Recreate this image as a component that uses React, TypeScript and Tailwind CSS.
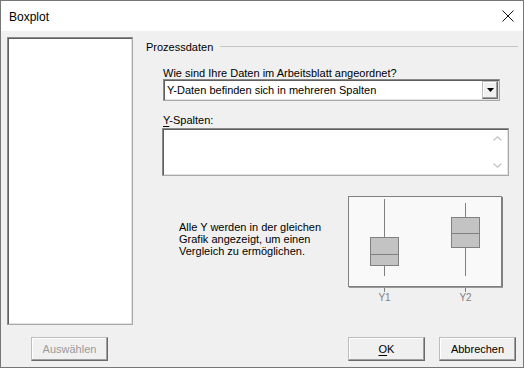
import React from 'react';

const sunken =
  'border border-t-[#8a8a8a] border-l-[#8a8a8a] border-r-[#a8a8a8] border-b-[#a8a8a8] shadow-[inset_1px_1px_0_#5e5e5e,inset_-1px_-1px_0_#e3e3e3]';

const raised =
  'border border-t-[#bdbdbd] border-l-[#bdbdbd] border-r-[#6a6a6a] border-b-[#6a6a6a] shadow-[inset_-1px_-1px_0_#a0a0a0,inset_1px_1px_0_#ffffff]';

function Chart() {
  return (
    <svg width="158" height="110" viewBox="0 0 158 110" className="block">
      <rect x="0.5" y="0.5" width="153" height="90" fill="#f9f9f9" stroke="#808080" />
      <line x1="154.5" y1="1" x2="154.5" y2="92" stroke="#808080" />
      <line x1="1" y1="91.5" x2="155" y2="91.5" stroke="#9a9a9a" />
      {/* Y1 */}
      <line x1="36.5" y1="3" x2="36.5" y2="80" stroke="#808080" />
      <rect x="22.5" y="41.5" width="28" height="28" fill="#c3c3c3" stroke="#808080" />
      <line x1="23" y1="58.5" x2="50" y2="58.5" stroke="#808080" />
      {/* Y2 */}
      <line x1="117.5" y1="7" x2="117.5" y2="80" stroke="#808080" />
      <rect x="103.5" y="21.5" width="28" height="30" fill="#c3c3c3" stroke="#808080" />
      <line x1="104" y1="37.5" x2="131" y2="37.5" stroke="#808080" />
      {/* ticks */}
      <line x1="36.5" y1="92" x2="36.5" y2="96" stroke="#808080" />
      <line x1="117.5" y1="92" x2="117.5" y2="96" stroke="#808080" />
      <text x="36.5" y="105" textAnchor="middle" fontSize="10" fill="#808080" fontFamily="Liberation Sans, Arial, sans-serif">
        Y1
      </text>
      <text x="117.5" y="105" textAnchor="middle" fontSize="10" fill="#808080" fontFamily="Liberation Sans, Arial, sans-serif">
        Y2
      </text>
    </svg>
  );
}

export default function App() {
  return (
    <div className="w-[524px] h-[368px] border border-[#767676] flex flex-col bg-[#f0f0f0] text-black font-['Liberation_Sans',Arial,sans-serif] text-[11px] leading-[12px] overflow-hidden">
      {/* Titelleiste */}
      <div className="h-[30px] bg-white flex items-center justify-between shrink-0">
        <span className="ml-[8px] text-[12px] leading-[14px] mt-[1px]">Boxplot</span>
        <svg width="12" height="12" viewBox="0 0 12 12" className="mr-[9px]">
          <path d="M0.5 0.5 L11.5 11.5 M11.5 0.5 L0.5 11.5" stroke="#111" strokeWidth="1" />
        </svg>
      </div>

      <div className="flex-1 flex flex-col">
        <div className="flex mt-[6px]">
          {/* Variablenliste */}
          <div className={`ml-[6px] w-[126px] h-[288px] bg-white shrink-0 ${sunken}`} />

          <div className="flex-1 flex flex-col">
            <div className="flex items-center mt-[3px] h-[13px]">
              <span className="ml-[13px] text-[11px]">Prozessdaten</span>
              <div className="flex-1 h-px bg-[#c4c4c4] ml-[7px] mr-[5px]" />
            </div>

            <div className="ml-[30px] mt-[14px] h-[12px]">
              <span className="underline underline-offset-[2px]">W</span>ie sind Ihre Daten im Arbeitsblatt angeordnet?
            </div>
            <div className={`ml-[30px] w-[337px] h-[22px] bg-white flex items-center ${sunken}`}>
              <span className="ml-[3px] flex-1">Y-Daten befinden sich in mehreren Spalten</span>
              <div className={`w-[16px] h-[18px] mr-[1px] bg-[#f0f0f0] flex items-center justify-center ${raised}`}>
                <svg width="7" height="4" viewBox="0 0 7 4">
                  <path d="M0 0 H7 L3.5 4 Z" fill="#000" />
                </svg>
              </div>
            </div>

            <div className="ml-[30px] mt-[13px] h-[12px]">
              <span className="underline underline-offset-[2px]">Y</span>-Spalten:
            </div>
            <div className={`ml-[29px] mt-[2px] w-[347px] h-[48px] bg-white flex justify-end ${sunken}`}>
              <div className="w-[17px] flex flex-col justify-between items-center py-[7px] mr-[2px]">
                <svg width="9" height="5" viewBox="0 0 9 5">
                  <path d="M0.5 4.5 L4.5 0.8 L8.5 4.5" fill="none" stroke="#c2c2c2" strokeWidth="1.2" />
                </svg>
                <svg width="9" height="5" viewBox="0 0 9 5">
                  <path d="M0.5 0.5 L4.5 4.2 L8.5 0.5" fill="none" stroke="#c2c2c2" strokeWidth="1.2" />
                </svg>
              </div>
            </div>

            <div className="flex mt-[20px]">
              <p className="ml-[46px] w-[169px] mt-[25px] leading-[12px]">
                Alle Y werden in der gleichen
                <br />
                Grafik angezeigt, um einen
                <br />
                Vergleich zu ermöglichen.
              </p>
              <Chart />
            </div>
          </div>
        </div>

        {/* Schaltflächen */}
        <div className="flex items-center mt-[12px]">
          <button className={`ml-[30px] w-[77px] h-[24px] bg-[#f0f0f0] text-[#9b9b9b] ${raised}`}>
            Auswählen
          </button>
          <div className="flex-1" />
          <button className={`w-[77px] h-[24px] bg-[#f0f0f0] ${raised}`}>
            <span className="underline underline-offset-[2px]">O</span>K
          </button>
          <button className={`ml-[14px] mr-[7px] w-[77px] h-[24px] bg-[#f0f0f0] ${raised}`}>
            Abbrechen
          </button>
        </div>
      </div>
    </div>
  );
}
